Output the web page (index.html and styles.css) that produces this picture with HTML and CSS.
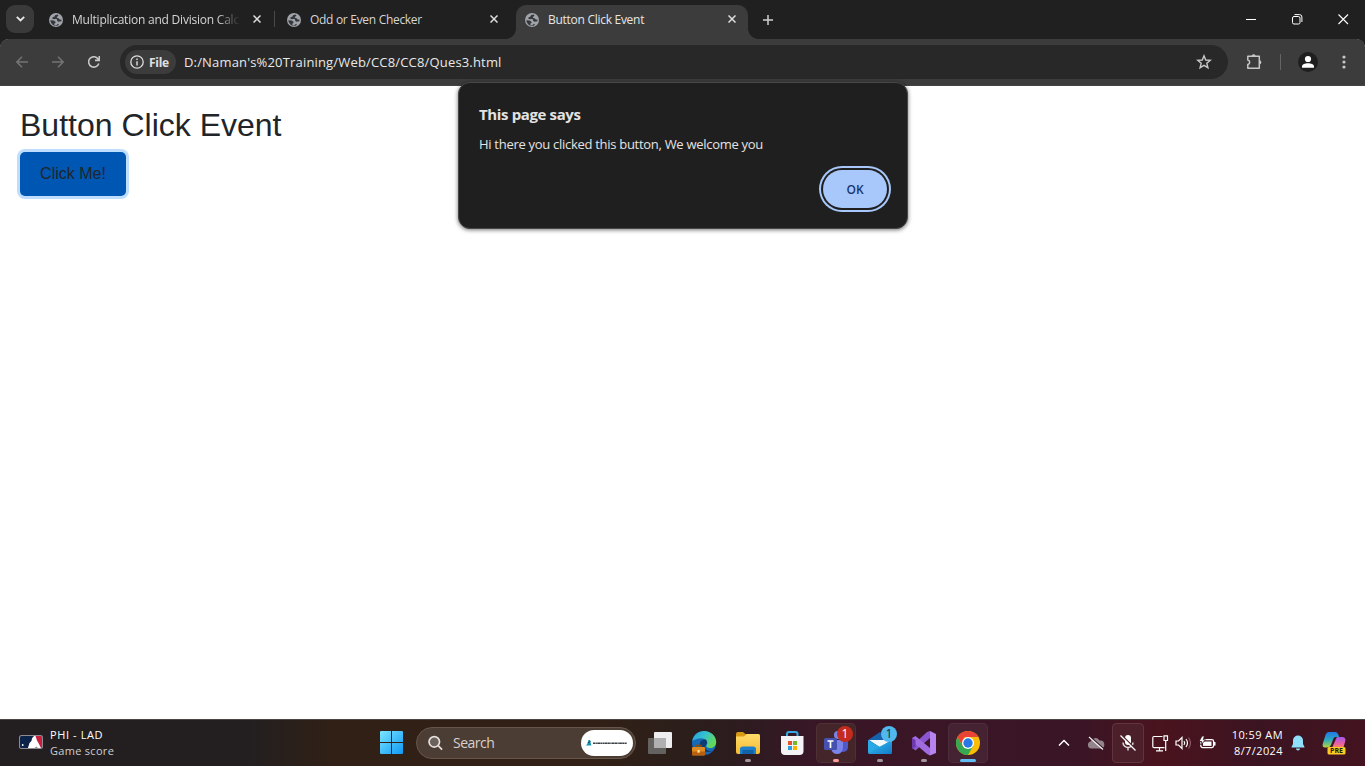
FILE: index.html
```html
<!DOCTYPE html>
<html lang="en">
<head>
<meta charset="utf-8">
<title>Button Click Event</title>
<link rel="stylesheet" href="styles.css">
</head>
<body>
<svg width="0" height="0" class="defs">
  <defs>
    <symbol id="globe" viewBox="0 0 14 14">
      <circle cx="7" cy="7" r="7" fill="#a0a4a9"/>
      <path d="M8.500 1.600 6 2.300 5.300 3.800 3.600 4.300 3.300 5.800 5.500 6.300 7 5.700 8.200 6.700 8.100 8 9.600 8.700 12.300 8.300 12.700 6.700 10.800 6.500 9.500 5.200 7.700 4.800 8.300 3.500 9.500 2.800Z" fill="#34373b"/>
      <path d="M1.300 7.200 4.700 7.600 6.700 9 6.200 10.200 5.300 10.600 5.500 12.300 7.300 12.500 8.300 11.200 10 10.700 9.200 12.500 7 12.900A5.900 5.900 0 0 1 1.300 7.200Z" fill="#34373b"/>
    </symbol>
    <symbol id="cross" viewBox="0 0 8 8"><path d="M.5.5 7.500 7.500M7.500.5.5 7.500" stroke="#dedede" stroke-width="1.500" fill="none"/></symbol>
    <linearGradient id="win" x1="0" y1="0" x2="1" y2="1"><stop offset="0" stop-color="#7be6ff"/><stop offset="1" stop-color="#0f98f5"/></linearGradient>
    <linearGradient id="edge" x1="0" y1="0" x2="1" y2=".5"><stop offset="0" stop-color="#249bdc"/><stop offset=".5" stop-color="#35c1d0"/><stop offset="1" stop-color="#62d959"/></linearGradient>
    <linearGradient id="fold" x1="0" y1="0" x2="0" y2="1"><stop offset="0" stop-color="#ffdc6b"/><stop offset="1" stop-color="#f5bb32"/></linearGradient>
    <linearGradient id="mail" x1="0" y1="0" x2="1" y2="1"><stop offset="0" stop-color="#35c4f2"/><stop offset="1" stop-color="#1479c9"/></linearGradient>
    <linearGradient id="copA" x1="0" y1="0" x2="0" y2="1"><stop offset="0" stop-color="#2178e8"/><stop offset=".5" stop-color="#2aa8c0"/><stop offset="1" stop-color="#b3d43b"/></linearGradient>
    <linearGradient id="copB" x1="0" y1="0" x2="0" y2="1"><stop offset="0" stop-color="#a05af0"/><stop offset=".55" stop-color="#e860a0"/><stop offset="1" stop-color="#ff9252"/></linearGradient>
  </defs>
</svg>
<div class="screen">
  <header class="tabstrip">
    <div class="tab-search"><svg width="9" height="6" viewBox="0 0 9 6"><path d="M.8.8 4.500 4.500 8.200.8" fill="none" stroke="#e8e8e8" stroke-width="1.800"/></svg></div>
    <div class="tab tab-divided"><svg class="favicon"><use href="#globe"/></svg><span class="tab-title t1">Multiplication and Division Calc</span><svg class="close"><use href="#cross"/></svg></div>
    <div class="tab"><svg class="favicon"><use href="#globe"/></svg><span class="tab-title">Odd or Even Checker</span><svg class="close"><use href="#cross"/></svg></div>
    <div class="tab active"><svg class="favicon"><use href="#globe"/></svg><span class="tab-title">Button Click Event</span><svg class="close"><use href="#cross"/></svg></div>
    <svg class="new-tab" width="10" height="10" viewBox="0 0 10 10"><path d="M5 0V10M0 5H10" stroke="#d0d0d0" stroke-width="1.500"/></svg>
    <div class="window-buttons">
      <svg width="11" height="11" viewBox="0 0 11 11"><path d="M0 5.500H10" stroke="#fff"/></svg>
      <svg width="11" height="11" viewBox="0 0 11 11" fill="none" stroke="#fff"><rect x=".5" y="2.500" width="7.500" height="7.500" rx="1.500"/><path d="M2.500.6H7.500Q9.900.6 9.900 3V8"/></svg>
      <svg width="11" height="11" viewBox="0 0 11 11"><path d="M.5.5 10 10M10 .5.5 10" stroke="#fff" stroke-width="1.100"/></svg>
    </div>
  </header>
  <nav class="toolbar">
    <svg class="nav-icon" width="12" height="12" viewBox="0 0 12 12" fill="none" stroke="#747474" stroke-width="1.500"><path d="M12 6H1M6 .8.9 6 6 11.200"/></svg>
    <svg class="nav-icon" width="12" height="12" viewBox="0 0 12 12" fill="none" stroke="#747474" stroke-width="1.500"><path d="M0 6H11M6 .8 11.100 6 6 11.200"/></svg>
    <svg class="nav-icon reload" width="12" height="12" viewBox="0 0 12 12" fill="none" stroke="#c7c7c7" stroke-width="1.600"><path d="M10.800 7.500A5.200 5.200 0 1 1 9.900 2.700L11.200 4.200M11.300 0V4.400H7"/></svg>
    <div class="omnibox">
      <div class="file-chip"><svg width="14" height="14" viewBox="0 0 14 14"><circle cx="7" cy="7" r="6.200" fill="none" stroke="#dedede" stroke-width="1.300"/><path d="M7 6.200V10.400M7 3.500V5" stroke="#dedede" stroke-width="1.400"/></svg><span class="chip-text">File</span></div>
      <span class="url">D:/Naman's%20Training/Web/CC8/CC8/Ques3.html</span>
      <svg class="star" width="16" height="16" viewBox="0 0 16 16"><path d="M8 1.800 9.700 6 14.300 6.300 10.800 9.200 11.900 13.700 8 11.300 4.100 13.700 5.200 9.200 1.700 6.300 6.300 6Z" fill="none" stroke="#c7c7c7" stroke-width="1.400"/></svg>
    </div>
    <svg class="puzzle" width="18" height="18" viewBox="0 0 18 18"><path d="M2.800 3.300H14.300V15.300H2.800V11.600C5.300 11 5.300 7.600 2.800 7Z" fill="none" stroke="#c7c7c7" stroke-width="1.500" stroke-linejoin="round"/><path d="M6.500 3.300A2.100 2.100 0 0 1 10.700 3.300ZM14.300 7.200A2.100 2.100 0 0 1 14.300 11.400Z" fill="#c7c7c7"/></svg>
    <i class="toolbar-divider"></i>
    <svg class="avatar" width="20" height="20" viewBox="0 0 20 20"><circle cx="10" cy="10" r="10" fill="#1f1f1f"/><circle cx="10" cy="7" r="3.100" fill="#fff"/><path d="M4 15.800V14.300C4 12.300 7 11.200 10 11.200S16 12.300 16 14.300V15.800Z" fill="#fff"/></svg>
    <svg class="dots" width="4" height="14" viewBox="0 0 4 14" fill="#c7c7c7"><circle cx="2" cy="2" r="1.600"/><circle cx="2" cy="7" r="1.600"/><circle cx="2" cy="12" r="1.600"/></svg>
  </nav>
  <main class="page">
    <h1 class="page-title">Button Click Event</h1>
    <button class="click-me">Click Me!</button>
    <section class="dialog">
      <h2 class="dialog-title">This page says</h2>
      <p class="dialog-text">Hi there you clicked this button, We welcome you</p>
      <button class="ok">OK</button>
    </section>
  </main>
  <footer class="taskbar">
    <div class="widget">
      <svg width="24" height="14" viewBox="0 0 24 14"><rect width="24" height="14" rx="2.500" fill="#8e8c92"/><path d="M2.500 1H15L9 13H2.500Q1 13 1 11.500V2.500Q1 1 2.500 1Z" fill="#0b2348"/><path d="M14 1H21.500Q23 1 23 2.500V11.500Q23 13 21.500 13H20Z" fill="#c91d3e"/><path d="M13 3.500Q13.500 1.500 15 2L14.500.9H16.500L18 5.500 20 9 22 13H19L17.500 11.500 15.500 13H9L10.500 8 12.500 6Z" fill="#fff"/><circle cx="3.700" cy="10" r=".9" fill="#fff"/></svg>
      <div class="widget-text"><span class="w1">PHI - LAD</span><span class="w2">Game score</span></div>
    </div>
    <svg class="start" width="23" height="23" viewBox="0 0 23 23" fill="url(#win)"><path d="M0 1Q0 0 1 0H11V11H0ZM12 0H22Q23 0 23 1V11H12ZM0 12H11V23H1Q0 23 0 22ZM12 12H23V22Q23 23 22 23H12Z"/></svg>
    <div class="search">
      <svg width="15" height="16" viewBox="0 0 16 16" fill="none" stroke="#e6e1de" stroke-width="1.800"><circle cx="6.700" cy="6.700" r="5.600" fill="#6b625e"/><path d="M10.800 10.800 15 15"/></svg>
      <span class="search-text">Search</span>
      <div class="search-pill"><svg width="42" height="8" viewBox="0 0 42 8"><path d="M2 1.500 4 .8 5.300 6.500H0L2 4Z" fill="#1794ad"/><path d="M1.500 4 4.500 2.500" stroke="#22425d"/><path d="M7 4.300H41" stroke="#3b4144" stroke-width="1.400" stroke-dasharray="2.300 .4 1.200 .3 2.800 .3"/></svg></div>
    </div>
    <div class="apps">
      <div class="app"><svg viewBox="0 0 32 32"><rect x="10" y="5" width="18" height="16" rx="1" fill="#eeeef0"/><rect x="4" y="11" width="18" height="16" rx="1" fill="#707070" fill-opacity=".83"/><path d="M10 11H22V21H10Z" fill="#b0b0b0"/></svg></div>
      <div class="app"><svg viewBox="0 0 32 32"><circle cx="16" cy="16" r="12" fill="#1668b8"/><path d="M4.200 14C5.500 7.500 10.500 4 16 4 23 4 28.200 9 28.200 15 28.200 19 25 21.500 21.500 21 18 20.500 18 19 19 17.500 21 13 14 8 4.200 14Z" fill="url(#edge)"/><path d="M17.500 12.500C12.500 12 10.500 16.500 12.500 21 14.500 25 20 26.500 26 23.200 23 25 17 23.500 17 20 17 18 19 17.500 19 15.500 19 14 18.500 13 17.500 12.500Z" fill="#0d3c70"/><path d="M8 20.500V18.500H13V20.500" stroke="#8b4b0a" fill="none" stroke-width="1.500"/><rect x="4" y="20" width="13" height="8.500" rx="1" fill="#df8a20"/><path d="M4 24.500H17V28H4Z" fill="#b96010"/><rect x="9.500" y="23" width="2.200" height="2.700" fill="#ffe09c"/></svg></div>
      <div class="app running"><svg viewBox="0 0 32 32"><path d="M4 7Q4 5 6 5H11L13.500 7H26Q28 7 28 9V15H4Z" fill="#d99a13"/><path d="M4 9.500H12L15 7H26Q28 7 28 9V25Q28 27 26 27H6Q4 27 4 25Z" fill="url(#fold)"/><path d="M8 27V22Q8 19.500 11 19.500H21Q24 19.500 24 22V27Z" fill="#1c7fce"/><path d="M10.500 23H21.500V27H10.500Z" fill="#1262a8"/></svg></div>
      <div class="app"><svg viewBox="0 0 32 32"><path d="M11 10V7Q11 5 13 5H19.500Q21.500 5 21.500 7V10" fill="none" stroke="#34a9e6" stroke-width="2"/><path d="M5 9H27.500V24Q27.500 28 23.500 28H9Q5 28 5 24Z" fill="#f4f4f6"/><path d="M12 14H16V18H12Z" fill="#e7512c"/><path d="M17 14H21V18H17Z" fill="#76b82a"/><path d="M12 19H16V23H12Z" fill="#2a9edf"/><path d="M17 19H21V23H17Z" fill="#f8b500"/></svg></div>
      <div class="app running boxed teams"><svg viewBox="0 0 32 32"><circle cx="18" cy="8" r="4" fill="#7b83e8"/><circle cx="25" cy="12" r="3" fill="#5a62c4"/><path d="M20 14H28V20Q28 25 22 25Z" fill="#5059c9"/><path d="M11 13H23V21Q22 27 17 27T11 21Z" fill="#7b83e8"/><rect x="4" y="11" width="13" height="12" rx="1.500" fill="#4650af"/><path d="M7.500 14H13.500M10.500 14V21" stroke="#fff" stroke-width="1.700"/></svg><b class="badge red">1</b></div>
      <div class="app running mail"><svg viewBox="0 0 32 32"><path d="M4 13 16 5 28 13V20H4Z" fill="#1760aa"/><path d="M5 13H27L17 21Z" fill="#f5f8fc"/><path d="M4 13 28 27H6Q4 27 4 25Z" fill="#2aa9e6"/><path d="M28 13V25Q28 27 26 27H6L4 26Z" fill="url(#mail)"/></svg><b class="badge blue">1</b></div>
      <div class="app running"><svg viewBox="0 0 32 32"><path d="M22 4 28 7V26L22 28.500Z" fill="#b783ee"/><path d="M22 4V11L7.500 23.500 4 21V19L19 5Z" fill="#8956d0"/><path d="M4 11 7.500 9 22 21V28.500L19 27 4 14Z" fill="#a16be0"/><path d="M4 11 7.500 13V20L4 21.500Z" fill="#6c39ad"/></svg></div>
      <div class="app running boxed current"><svg viewBox="0 0 32 32"><circle cx="16" cy="16" r="12" fill="#fbbc05"/><path d="M5.600 10A12 12 0 0 0 16 28L21.200 19 16 16 10.800 19Z" fill="#34a853"/><path d="M5.600 10 10.800 19 12 10.500 16 10H26.400A12 12 0 0 0 5.600 10Z" fill="#ea4335"/><circle cx="16" cy="16" r="6" fill="#fff"/><circle cx="16" cy="16" r="4.700" fill="#2879e8"/></svg></div>
    </div>
    <div class="tray">
      <svg class="tray-up" width="12" height="8" viewBox="0 0 12 8"><path d="M1 6.500 6 1.500 11 6.500" fill="none" stroke="#fff" stroke-width="1.500"/></svg>
      <svg class="cloud" width="18" height="16" viewBox="0 0 18 16"><path d="M4 13.500A3.600 3.600 0 0 1 3.500 6.500 5 5 0 0 1 12.500 5.500 4 4 0 0 1 14 13.500Z" fill="#94858d"/><path d="M2.600 1.400 16.600 13.900" stroke="#3a1626" stroke-width="1.500"/><path d="M2 2 16 14.500" stroke="#f2f2f2" stroke-width="1.200"/></svg>
      <div class="mic"><svg width="18" height="18" viewBox="0 0 18 18"><rect x="6" y="1" width="6" height="10" rx="3" fill="#fff"/><path d="M4 8.500A5 5 0 0 0 14 8.500M9 13.500V16.500" stroke="#ddd" stroke-width="1.500" fill="none"/><path d="M2.300.7 17.300 15.700" stroke="#4b202a" stroke-width="1.500"/><path d="M1.500 1.500 16.500 16.500" stroke="#fff" stroke-width="1.200"/></svg></div>
      <svg class="monitor" width="17" height="17" viewBox="0 0 17 17" fill="none" stroke="#fff" stroke-width="1.200"><path d="M10.500 1.500H2Q.8 1.500.8 2.700V11.500Q.8 12.700 2 12.700H12.500M4 15.800H11M7.500 12.700V15.800"/><path d="M12 .8H15.500V5.500H12ZM13.700 5.500V16"/></svg>
      <svg class="sound" width="17" height="14" viewBox="0 0 17 14" fill="none" stroke="#fff" stroke-width="1.200"><path d="M1 5H3.500L7 1.500V12.500L3.500 9H1Z"/><path d="M9 5Q10.500 7 9 9M11 3Q14 7 11 11"/><path d="M13.500 1.500Q17.500 7 13.500 12.500" stroke="#8c5862"/></svg>
      <svg class="battery" width="17" height="14" viewBox="0 0 17 14"><rect x="1.800" y="3.600" width="12.800" height="8" rx="1.800" fill="none" stroke="#fff" stroke-width="1.300"/><path d="M4 5.500H12.500V9.900H4Z" fill="#fff"/><path d="M15 6H16.500V9.500H15Z" fill="#fff"/><path d="M3 0 0 5.500H2.500L1.800 9 6.500 3.800H4.300L5.500 0Z" fill="#fff" stroke="#3e1521" stroke-width=".9"/></svg>
      <div class="clock"><span class="time">10:59 AM</span><span class="date">8/7/2024</span></div>
      <svg class="bell" width="14" height="16" viewBox="0 0 14 16" fill="#8fe0fd"><path d="M7 .5A5 5 0 0 1 12 5.500V9L13.500 12V12.500H.5V12L2 9V5.500A5 5 0 0 1 7 .5ZM5 13.500H9A2 2 0 0 1 5 13.500Z"/></svg>
      <svg class="copilot" width="24" height="24" viewBox="0 0 24 24"><path d="M7 1H13.500Q15.500 1 16.500 4L17 6H13.500Q11.500 6 10.500 10L9 14Q8 16.500 5 16.500H3Q0 16.500.7 13L3.500 4Q4.500 1 7 1Z" fill="url(#copA)"/><path d="M15.500 6H20Q24 6 23.300 10L21 18H9.500L13.500 9Q14.500 6 15.500 6Z" fill="url(#copB)"/><rect x="5.500" y="16" width="18" height="7.500" rx="1.500" fill="#fccc24"/><text x="8" y="22.300" class="pre" textLength="13" lengthAdjust="spacingAndGlyphs">PRE</text></svg>
    </div>
  </footer>
</div>
</body>
</html>
```

FILE: styles.css
```css
* { box-sizing: border-box; }
body { margin: 0; overflow: hidden; font-family: "Open Sans", "Noto Sans", sans-serif; }
svg { display: block; flex: none; }
.defs { position: absolute; }
.screen { width: 1365px; height: 766px; display: flex; flex-direction: column; background: #fff; }

/* Tab strip */
.tabstrip { height: 39px; flex: none; display: flex; align-items: center; background: #202020; padding-left: 6px; }
.tab-search { width: 28px; height: 28px; margin: 0 6px 1px 0; border-radius: 9px; background: #3a3a3a; display: grid; place-items: center; }
.tab { position: relative; width: 232px; height: 34px; margin: 5px 6px 0 0; padding: 0 12px 5px 9px; display: flex; align-items: center; }
.tab-divided::after { content: ""; position: absolute; right: -3px; top: 6px; width: 1px; height: 16px; background: #484848; }
.favicon { width: 14px; height: 14px; margin-right: 9px; }
.close { width: 8px; height: 8px; margin: 0 0 1px 14px; }
.tab-title { flex: 1; white-space: nowrap; font-size: 12px; line-height: 18px; color: #d5d5d5; letter-spacing: -.3px; }
.t1 { letter-spacing: -.22px; -webkit-mask-image: linear-gradient(90deg, #000 145px, transparent 168px); mask-image: linear-gradient(90deg, #000 145px, transparent 168px); }
.active { background: #3c3c3c; border-radius: 10px 10px 0 0; margin-right: 15px; }
.active::before, .active::after { content: ""; position: absolute; bottom: 0; width: 10px; height: 10px; }
.active::before { left: -10px; background: radial-gradient(circle at 0 0, transparent 9.5px, #3c3c3c 10px); }
.active::after { right: -10px; background: radial-gradient(circle at 100% 0, transparent 9.5px, #3c3c3c 10px); }
.active .tab-title { color: #e6e6e6; letter-spacing: -.28px; }
.window-buttons { margin-left: auto; margin-right: 16px; display: flex; gap: 35px; }

/* Toolbar */
.toolbar { height: 47px; flex: none; display: flex; align-items: center; background: #3c3c3c; border-radius: 8px 8px 0 0; padding: 0 19px 1px 16px; box-shadow: inset 0 -1px #454545; }
.screen > .toolbar { position: relative; }
.toolbar::before { content: ""; position: absolute; inset: 0 0 auto; height: 8px; z-index: 0; background: radial-gradient(circle at 8px 8px, transparent 7.5px, #202020 8px) 0 0 / 8px 8px no-repeat, radial-gradient(circle at 0 8px, transparent 7.5px, #202020 8px) 100% 0 / 8px 8px no-repeat; }
.nav-icon { margin-right: 24px; }
.reload { margin-right: 20px; }
.omnibox { width: 1108px; height: 34px; border-radius: 17px; background: #282828; display: flex; align-items: center; padding: 0 16px 0 5px; }
.file-chip { width: 51px; height: 24px; border-radius: 12px; background: #3c3c3c; display: flex; align-items: center; gap: 5px; padding-left: 5px; margin-right: 8px; }
.chip-text { font-size: 12px; font-weight: 700; color: #e0e0e0; letter-spacing: -.3px; }
.url { font-size: 13px; color: #e8e8e8; letter-spacing: .17px; white-space: nowrap; }
.star { margin-left: auto; }
.puzzle { margin-left: 17px; }
.toolbar-divider { width: 1px; height: 16px; margin: 0 17px; background: #646464; }
.dots { margin-left: auto; }

/* Document */
.page { position: relative; flex: 1; padding: 20px; font-family: "Liberation Sans", Arial, sans-serif; color: #212529; }
.page-title { margin: 0 0 8px; font-size: 32px; line-height: 38px; font-weight: 400; }
.click-me { display: block; width: 106px; height: 44px; border: 0; border-radius: 5px; background: #0056b3; box-shadow: 0 0 0 3px #bfdeff; font: 16px "Liberation Sans", Arial, sans-serif; color: #212529; padding: 0; }
.dialog { position: absolute; left: 458px; top: -4px; width: 450px; height: 147px; border: 1px solid #484848; border-radius: 12px; background: #1f1f1f; box-shadow: 0 1px 4px rgba(0,0,0,.55); padding: 19px 19px 0 20px; display: flex; flex-direction: column; font-family: "Open Sans", sans-serif; color: #e3e3e3; }
.dialog-title { margin: 0; font-size: 15px; line-height: 24px; font-weight: 700; letter-spacing: -.37px; }
.dialog-text { margin: 8px 0 0; font-size: 13px; line-height: 20px; letter-spacing: -.29px; }
.ok { align-self: flex-end; width: 64px; height: 38px; margin: 16px 1px 0 0; border: 0; border-radius: 19px; background: #a8c7fa; box-shadow: 0 0 0 2px #1f1f1f, 0 0 0 4px #a8c7fa; color: #17386f; font: 600 12px "Open Sans", sans-serif; padding: 0; }

/* Taskbar */
.taskbar { height: 47px; flex: none; display: flex; align-items: center; border-top: 1px solid #4a4443; background: linear-gradient(90deg, #231f20 0, #231f20 250px, #302016 330px, #302016 600px, #2b1e1b 690px, #2e1b20 750px, #391626 820px, #3a1525 1080px, #4a131d 1160px, #3b1422 1260px, #43131f 1365px); color: #fff; padding-left: 19px; }
.widget { width: 361px; display: flex; align-items: center; gap: 7px; }
.widget > svg { margin-bottom: 3px; }
.widget-text { display: flex; flex-direction: column; font-size: 11px; line-height: 16px; }
.w1 { letter-spacing: .6px; }
.w2 { color: #d0cecd; letter-spacing: .3px; }
.start { margin-bottom: 1px; }
.search { width: 220px; height: 32px; margin: 0 0 1px 13px; border: 1px solid #65554b; border-radius: 16px; background: #4c3d34; display: flex; align-items: center; padding: 0 2px 0 11px; }
.search-text { margin-left: 10px; font-size: 14px; color: #d7d0cc; letter-spacing: -.5px; }
.search-pill { width: 52px; height: 26px; margin-left: auto; border-radius: 13px; background: #fff; display: grid; place-items: center; }
.apps { display: flex; margin-left: 2px; }
.app { position: relative; width: 44px; height: 40px; display: grid; place-items: center; }
.app > svg { position: relative; width: 32px; height: 32px; margin-bottom: 1px; }
.running::after { content: ""; position: absolute; left: 19px; bottom: 1px; width: 6px; height: 3px; border-radius: 2px; background: #a2969b; }
.boxed::before { content: ""; position: absolute; inset: 0 2px; border-radius: 5px; background: rgba(255,255,255,.06); border: 1px solid rgba(255,255,255,.05); }
.teams::before { background: #44262a; }
.teams::after { background: #ff9c9c; }
.current::after { left: 14px; width: 16px; background: #60bdf3; }
.badge { position: absolute; left: 23px; top: 3px; width: 16px; height: 16px; border-radius: 50%; font-size: 12px; line-height: 16px; font-weight: 400; text-align: center; }
.red { background: #c42b1c; color: #fff; }
.blue { background: #50b8ee; color: #102a3c; }
.tray { display: flex; align-items: center; margin-left: 68px; }
.cloud { margin-left: 17px; }
.mic { width: 32px; height: 40px; margin-left: 7px; border: 1px solid #62343d; border-radius: 4px; background: #4b202a; display: grid; place-items: center; }
.monitor { margin-left: 8px; }
.sound { margin-left: 6px; }
.battery { margin-left: 7px; }
.clock { width: 67px; display: flex; flex-direction: column; align-items: flex-end; font-size: 11px; line-height: 16px; white-space: nowrap; letter-spacing: .4px; }
.time { letter-spacing: .45px; }
.bell { margin-left: 8px; }
.copilot { margin-left: 17px; }
.pre { font: 700 7px "Open Sans", sans-serif; fill: #251b00; }
```
